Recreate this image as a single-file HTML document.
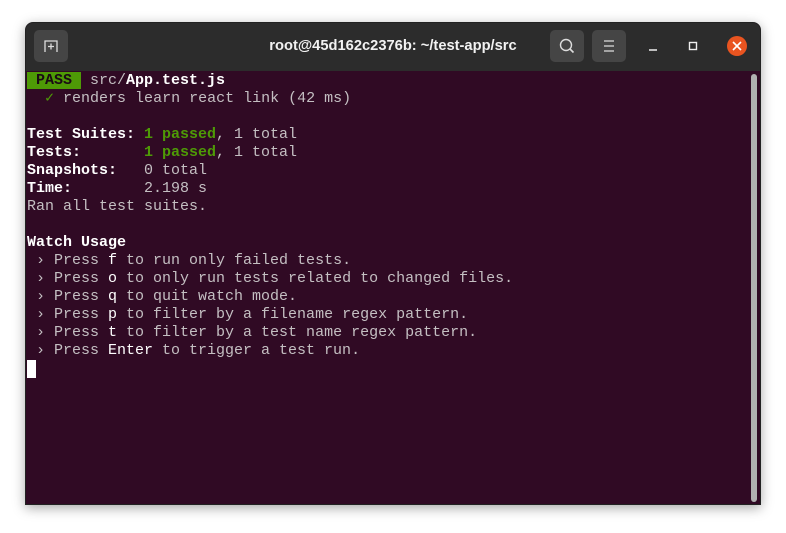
<!DOCTYPE html>
<html><head><style>
body{margin:0;width:786px;height:533px;background:#fff;position:relative;overflow:hidden;font-family:"Liberation Sans",sans-serif}
.win{position:absolute;left:25px;top:22px;width:736px;height:483px;background:#300a24;border-radius:8px 8px 0 0;box-shadow:0 3px 12px rgba(0,0,0,.35);overflow:hidden;border:1px solid #222;box-sizing:border-box}
.tb{position:absolute;left:0;top:0;width:100%;height:48px;background:#2c2c2c}
.btn{position:absolute;top:7px;width:34px;height:32px;background:#454545;border-radius:5px}
.title{position:absolute;left:0;right:0;top:15px;text-align:center;color:#f2f2f2;font-weight:bold;font-size:14.7px}
.term{position:absolute;left:1px;top:49px;font-family:"Liberation Mono",monospace;font-size:15px;line-height:18px;color:#c4bfc2;white-space:pre}
b{color:#fff}
.g{color:#4e9a06;font-weight:bold}
.pass{background:#4e9a06;color:#1a0a14;font-weight:bold}
.sb{position:absolute;left:725px;top:51px;width:6px;height:428px;background:#b0b0b0;border-radius:3px}
.cur{position:absolute;left:1px;top:337px;width:9px;height:18px;background:#fff}
</style></head><body>
<div class="win">
<div class="tb">
<div class="btn" style="left:8px"><svg width="34" height="32"><path d="M11 22V11h12v11M14 16.5h6M17 13.5v6" stroke="#ddd" stroke-width="1.3" fill="none"/></svg></div>
<div class="title">root@45d162c2376b: ~/test-app/src</div>
<div class="btn" style="left:524px"><svg width="34" height="32"><circle cx="16" cy="15" r="5.5" stroke="#ddd" stroke-width="1.4" fill="none"/><path d="M20 19l3.5 3.5" stroke="#ddd" stroke-width="1.6"/></svg></div>
<div class="btn" style="left:566px"><svg width="34" height="32"><path d="M12 11h10M12 16h10M12 21h10" stroke="#ddd" stroke-width="1.3"/></svg></div>
<svg style="position:absolute;left:620px;top:10px" width="110" height="28"><path d="M3 17h8" stroke="#eee" stroke-width="1.5"/><rect x="43.5" y="9.5" width="7" height="7" stroke="#eee" stroke-width="1.4" fill="none"/><circle cx="91" cy="13" r="10" fill="#e95420"/><path d="M87 9l8 8M95 9l-8 8" stroke="#fff" stroke-width="1.6"/></svg>
</div>
<div class="term"><span class="pass"> PASS </span> src/<b>App.test.js</b>
  <span style="color:#4e9a06">✓</span> renders learn react link (42 ms)

<b>Test Suites: </b><span class="g">1 passed</span>, 1 total
<b>Tests:       </b><span class="g">1 passed</span>, 1 total
<b>Snapshots:   </b>0 total
<b>Time:        </b>2.198 s
Ran all test suites.

<b>Watch Usage</b>
 › Press <b style="font-weight:normal">f</b> to run only failed tests.
 › Press <b style="font-weight:normal">o</b> to only run tests related to changed files.
 › Press <b style="font-weight:normal">q</b> to quit watch mode.
 › Press <b style="font-weight:normal">p</b> to filter by a filename regex pattern.
 › Press <b style="font-weight:normal">t</b> to filter by a test name regex pattern.
 › Press <b style="font-weight:normal">Enter</b> to trigger a test run.</div>
<div class="cur"></div>
<div class="sb"></div>
</div>
</body></html>
